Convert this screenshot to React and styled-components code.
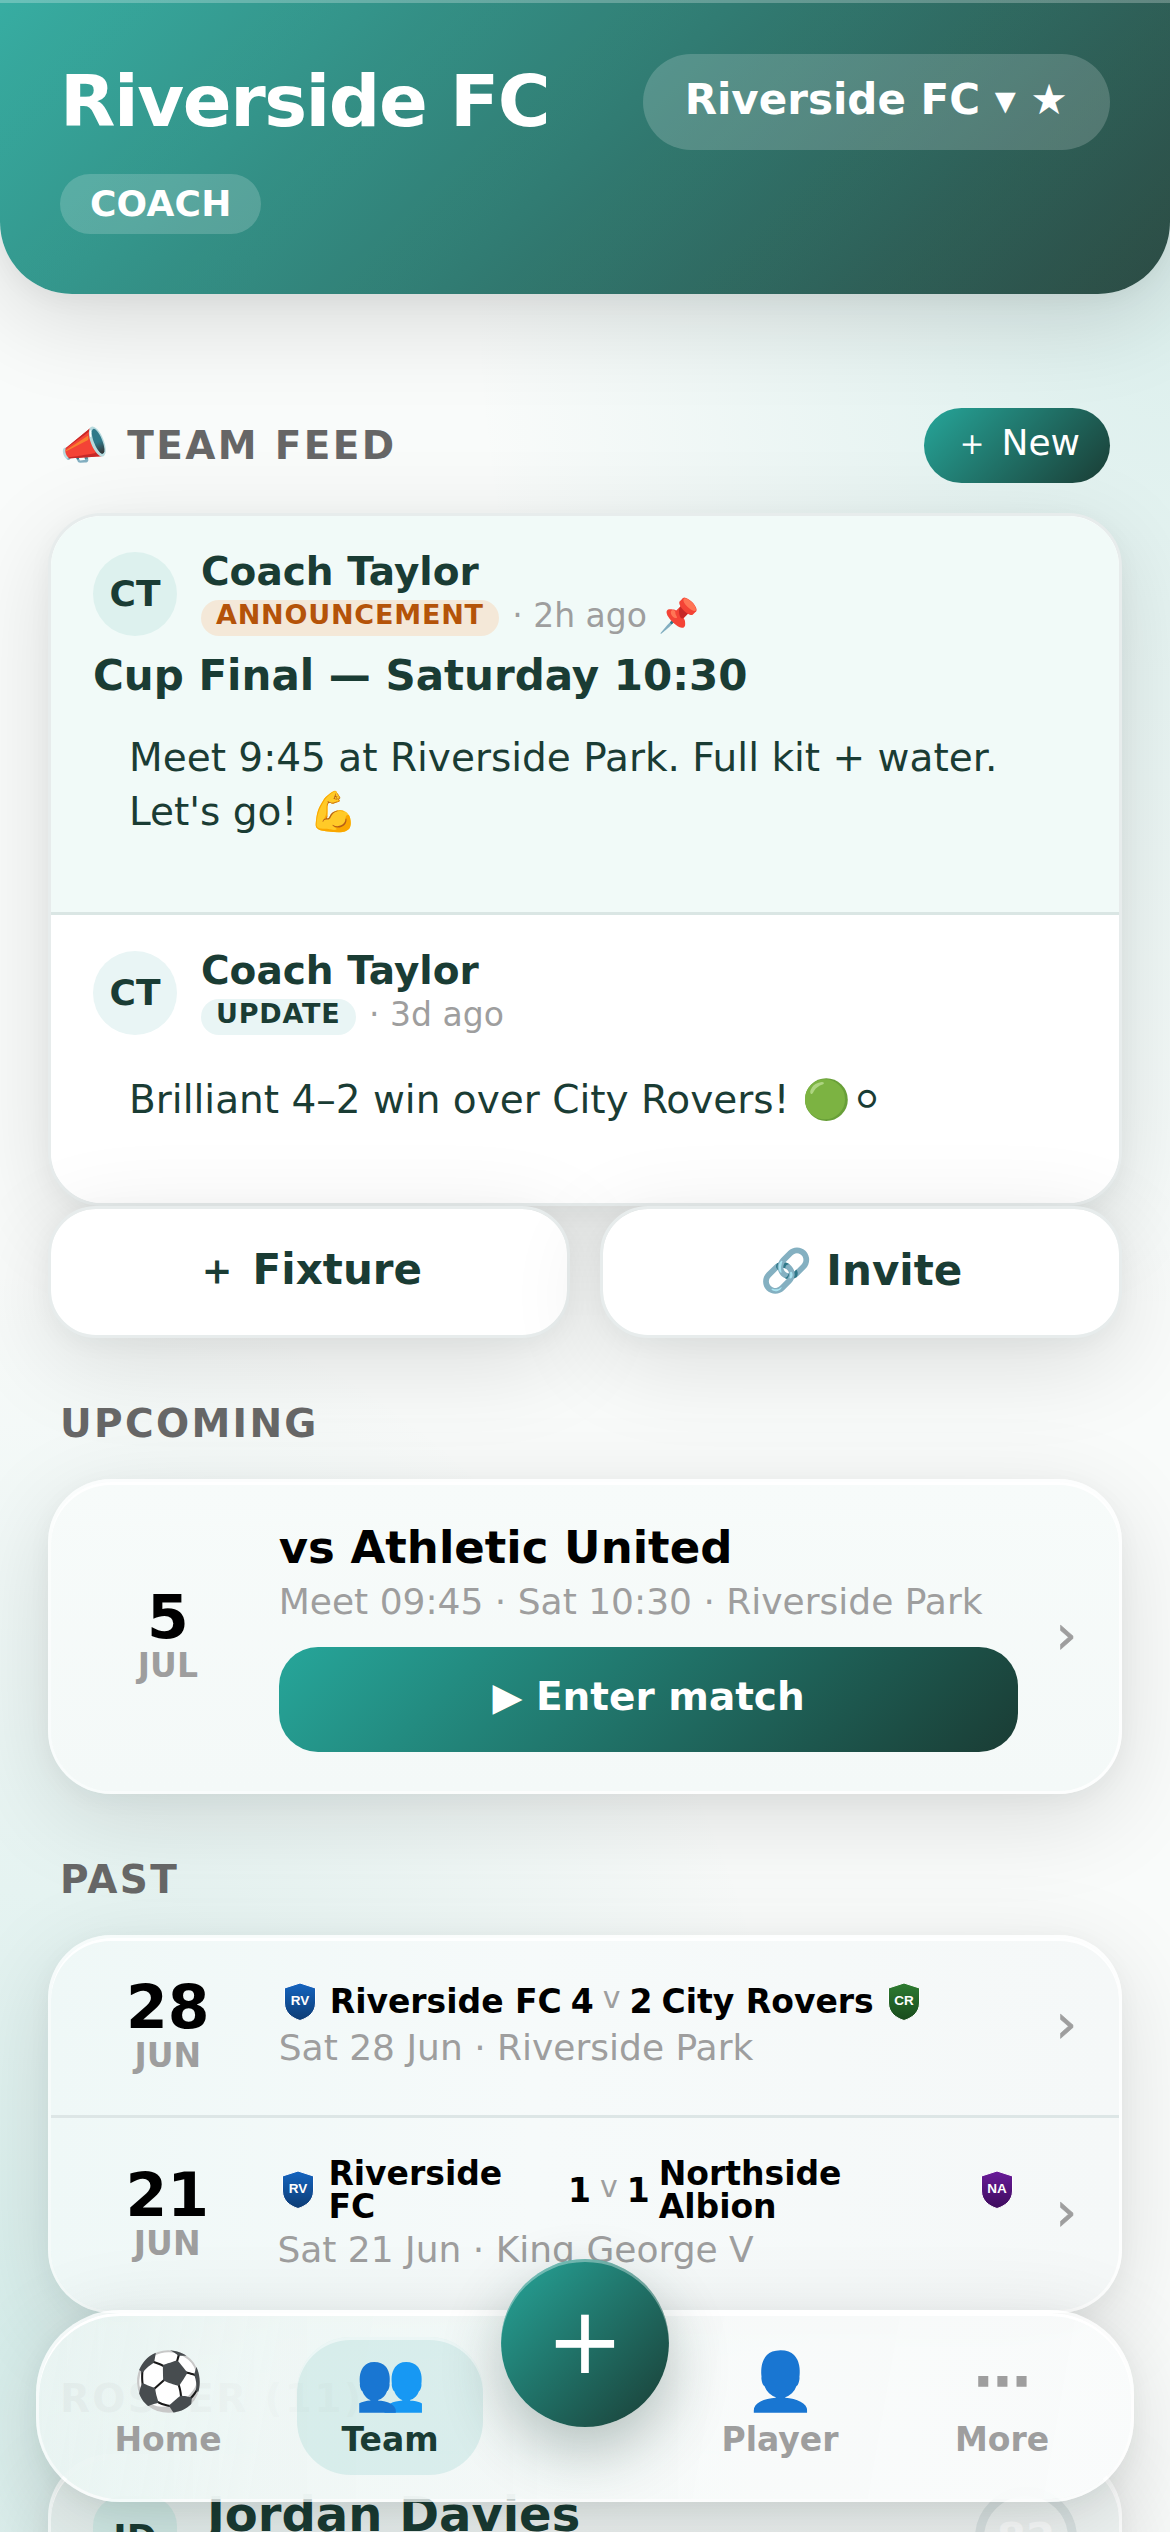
import React from "react";
import styled, { createGlobalStyle, css } from "styled-components";

const ink = "#1a3c34";
const teal = "#26a69a";
const brand = `linear-gradient(135deg, ${teal} 0%, ${ink} 100%)`;
const shadow = "0 24px 96px rgba(0, 0, 0, 0.12), 0 6px 24px rgba(20, 50, 46, 0.04)";

const GlobalStyle = createGlobalStyle`
  * { box-sizing: border-box; }
  html, body { margin: 0; padding: 0; }
  body {
    font-family: "DejaVu Sans", sans-serif;
    color: ${ink};
    overflow: hidden;
  }
  button { font-family: inherit; border: 0; margin: 0; }
`;

const Screen = styled.div`
  height: 2532px;
  width: 1170px;
  overflow: hidden;
  position: relative;
  background:
    radial-gradient(ellipse 60% 42% at 100% 10%, rgba(38, 166, 154, 0.14), transparent 100%),
    radial-gradient(ellipse 70% 42% at 0% 92%, rgba(38, 166, 154, 0.16), transparent 100%),
    #f9fbfa;
`;

const Header = styled.header`
  height: 294px;
  padding: 54px 60px 0;
  border-radius: 0 0 72px 72px;
  background: linear-gradient(rgba(255, 255, 255, 0.08), rgba(255, 255, 255, 0.08)), ${brand};
  box-shadow: 0 24px 96px rgba(0, 0, 0, 0.14), 0 6px 24px rgba(0, 0, 0, 0.04), inset 0 3px 0 rgba(255, 255, 255, 0.25);
  color: #fff;
`;

const HeaderRow = styled.div`
  display: flex;
  justify-content: space-between;
  align-items: center;
  height: 96px;
`;

const ClubName = styled.h1`
  margin: 0;
  padding-bottom: 3px;
  font-size: 72px;
  line-height: 84px;
  letter-spacing: -1.44px;
  font-weight: 700;
`;

const ClubSwitch = styled.button`
  height: 96px;
  padding: 0 42px 6px;
  border-radius: 48px;
  background: rgba(255, 255, 255, 0.18);
  color: #fff;
  font-size: 42px;
  font-weight: 700;
`;

const RoleChip = styled.span`
  display: inline-block;
  margin-top: 24px;
  height: 60px;
  line-height: 60px;
  padding: 0 30px;
  border-radius: 30px;
  background: rgba(255, 255, 255, 0.18);
  font-size: 36px;
  font-weight: 700;
  letter-spacing: 0.2px;
`;

const SectionHead = styled.div`
  display: flex;
  align-items: center;
  justify-content: space-between;
  padding: 0 60px;
  height: ${(p) => p.$h}px;
  margin-top: ${(p) => p.$top}px;
  margin-bottom: ${(p) => p.$bottom}px;
`;

const SectionTitle = styled.h2`
  margin: 0;
  font-size: 39px;
  line-height: 46px;
  font-weight: 700;
  letter-spacing: 2.34px;
  color: #666;
`;

const NewButton = styled.button`
  height: 75px;
  padding: 0 30px 4px;
  border-radius: 38px;
  background: ${brand};
  color: #fff;
  font-size: 36px;
`;

const FeedCard = styled.section`
  margin: 0 48px;
  border: 3px solid #e7ecec;
  border-radius: 54px;
  background: #fff;
  overflow: hidden;
  box-shadow: ${shadow};
`;

const Post = styled.article`
  height: ${(p) => p.$h}px;
  padding: 36px 42px 0;
  background: ${(p) => (p.$pinned ? "#f1faf8" : "#fff")};
  border-bottom: ${(p) => (p.$pinned ? "3px solid #dae6e4" : "0")};
`;

const PostHead = styled.div`
  display: flex;
  gap: 24px;
  height: 84px;
`;

const Avatar = styled.div`
  width: 84px;
  height: 84px;
  flex: none;
  padding-bottom: 2px;
  border-radius: ${(p) => (p.$square ? "30px" : "50%")};
  background: ${(p) => (p.$square ? "#d0e9e5" : p.$soft ? "#e9f5f5" : "#ddf1ee")};
  display: flex;
  align-items: center;
  justify-content: center;
  font-size: 36px;
  font-weight: 700;
`;

const Author = styled.div`
  font-size: 39px;
  font-weight: 700;
  line-height: 45px;
  margin-top: -3px;
`;

const PostMeta = styled.div`
  display: flex;
  align-items: center;
  height: 42px;
  font-size: 33px;
  color: #9e9e9e;
  white-space: pre;
`;

const Badge = styled.span`
  height: 36px;
  line-height: 29px;
  padding: 0 15px;
  margin-top: 6px;
  margin-right: 3px;
  border-radius: 18px;
  font-size: 27px;
  font-weight: 700;
  letter-spacing: 0.8px;
  color: ${(p) => (p.$warn ? "#b45309" : ink)};
  background: ${(p) => (p.$warn ? "#f4e8d8" : "#e9f5f5")};
`;

const Pin = styled.span`
  margin-left: 1px;
`;

const PostTitle = styled.h3`
  margin: 15px 0 0;
  font-size: 42px;
  line-height: 50px;
  font-weight: 700;
`;

const PostBody = styled.p`
  margin: ${(p) => p.$top}px 36px 0;
  font-size: 39px;
  line-height: 54px;
`;

const Actions = styled.div`
  display: grid;
  grid-template-columns: 1fr 1fr;
  gap: 30px;
  padding: 0 48px;
`;

const ActionButton = styled.button`
  height: 132px;
  padding: 0 0 4px;
  border: 3px solid #e7ecec;
  border-radius: 48px;
  background: #fff;
  background-clip: padding-box;
  box-shadow: ${shadow};
  color: ${ink};
  font-size: 42px;
  font-weight: 700;
`;

const surfaces = {
  plain: "linear-gradient(180deg, #f7fbfa, #f4f9f8)",
  tinted: "linear-gradient(90deg, #eff8f7, #f6fafa 45%, #f5f8f8)",
  dim: "linear-gradient(90deg, #e4efed, #edf3f2 45%, #eff4f3)",
};

const GlassCard = styled.section`
  margin: 0 48px;
  border: 3px solid rgba(255, 255, 255, 0.7);
  border-radius: 63px;
  background: ${(p) => surfaces[p.$surface]};
  background-clip: padding-box;
  box-shadow: ${shadow}, inset 0 3px 0 rgba(255, 255, 255, 0.9);
`;

const MatchRow = styled.div`
  display: flex;
  align-items: center;
  height: ${(p) => p.$h}px;
  padding: 0 42px;
  ${(p) => p.$divider && css`
    padding-bottom: 4px;
    border-bottom: 3px solid #dde6e6;
  `}
`;

const DateBox = styled.div`
  width: 150px;
  margin-right: 36px;
  margin-top: ${(p) => p.$shift || 0}px;
  text-align: center;
`;

const Day = styled.div`
  font-size: 60px;
  line-height: 60px;
  font-weight: 700;
  color: #000;
`;

const Month = styled.div`
  font-size: 33px;
  line-height: 38px;
  font-weight: 700;
  color: #9e9e9e;
`;

const MatchInfo = styled.div`
  width: 741px;
`;

const Opponent = styled.div`
  font-size: 45px;
  line-height: 54px;
  font-weight: 700;
  color: #000;
`;

const MatchMeta = styled.div`
  font-size: 36px;
  line-height: 42px;
  margin-top: ${(p) => p.$top || 0}px;
  color: #9e9e9e;
`;

const EnterButton = styled.button`
  display: block;
  width: 100%;
  height: 105px;
  margin-top: 24px;
  padding: 0 0 6px;
  border-radius: 39px;
  background: ${brand};
  color: #fff;
  font-size: 39px;
  font-weight: 700;
`;

const Chevron = styled.span`
  margin-left: 37px;
  margin-top: ${(p) => p.$shift}px;
  font-size: 54px;
  line-height: 54px;
  color: #9e9e9e;
  -webkit-text-stroke: 0.6px #9e9e9e;
`;

const ScoreLine = styled.div`
  display: flex;
  align-items: center;
  gap: 9px;
  font-size: 33px;
  line-height: 33px;
  font-weight: 700;
  color: #000;
`;

const Team = styled.span`
  width: ${(p) => (p.$w ? `${p.$w}px` : "auto")};
  padding-right: ${(p) => (p.$w ? "4px" : "0")};
  white-space: ${(p) => (p.$w ? "normal" : "nowrap")};
`;

const Versus = styled.span`
  font-size: 30px;
  font-weight: 400;
  color: #9e9e9e;
  margin-top: -8px;
`;

const Crest = styled.svg`
  width: 42px;
  height: 42px;
  flex: none;
`;

const PlayerRow = styled.div`
  display: flex;
  align-items: flex-start;
  padding: 39px 42px;
`;

const PlayerName = styled.div`
  flex: 1;
  margin-left: 30px;
  font-size: 48px;
  line-height: 56px;
  font-weight: 700;
  margin-top: -10px;
`;

const Rating = styled.div`
  width: 102px;
  height: 102px;
  margin-top: -9px;
  border: 9px solid #dae3e3;
  border-radius: 50%;
  display: flex;
  align-items: center;
  justify-content: center;
  font-size: 42px;
  font-weight: 700;
  color: #fbfdfd;
`;

const TabBar = styled.nav`
  position: absolute;
  left: 36px;
  top: 2310px;
  width: 1098px;
  height: 192px;
  padding: 0 18px;
  display: flex;
  align-items: center;
  border: 3px solid rgba(255, 255, 255, 0.75);
  border-radius: 84px;
  background:
    linear-gradient(90deg, rgba(225, 242, 239, 0.5), rgba(225, 242, 239, 0) 65%),
    linear-gradient(100deg, rgba(243, 247, 246, 0.88), rgba(246, 249, 248, 0.97) 22%, rgba(249, 251, 251, 0.95));
  background-clip: padding-box;
  box-shadow: 0 24px 96px rgba(0, 0, 0, 0.14), 0 6px 24px rgba(20, 50, 46, 0.05), inset 0 3px 0 #fff;
`;

const TabSlot = styled.div`
  width: 222px;
  display: flex;
  justify-content: center;
`;

const Tab = styled.button`
  width: 186px;
  height: 138px;
  padding: 8px 0 0;
  display: flex;
  flex-direction: column;
  align-items: center;
  border-radius: 54px;
  background: ${(p) => (p.$active ? "rgba(38, 166, 154, 0.12)" : "none")};
  box-shadow: ${(p) => (p.$active ? "inset 0 3px 0 rgba(255, 255, 255, 0.5)" : "none")};
  color: ${(p) => (p.$active ? ink : "#9e9e9e")};
  font-size: 33px;
  font-weight: 700;
`;

const TabIcon = styled.span`
  font-size: 57px;
  line-height: 72px;
  height: 72px;
`;

const TabLabel = styled.span`
  line-height: 39px;
  margin-top: 3px;
`;

const Fab = styled.button`
  width: 168px;
  height: 168px;
  padding: 0 0 3px;
  margin-top: -126px;
  border-radius: 50%;
  background: ${brand};
  box-shadow: 0 24px 60px rgba(27, 58, 54, 0.3), inset 0 3px 0 rgba(255, 255, 255, 0.35);
  color: #fff;
  font-size: 93px;
  line-height: 93px;
`;

function Shield({ code, from, to }) {
  const id = `crest-${code}`;
  return (
    <Crest viewBox="0 0 42 42">
      <defs>
        <linearGradient id={id} x1="0" y1="0" x2="0" y2="1">
          <stop offset="0" stopColor={from} />
          <stop offset="1" stopColor={to} />
        </linearGradient>
      </defs>
      <path
        d="M21 2 L36.5 7 V22 C36.5 31 29.5 37 21 39.500 C12.500 37 5.500 31 5.500 22 V7 Z"
        fill={`url(#${id})`}
        stroke="#fff"
        strokeWidth="1"
      />
      <text x="21" y="23.800" textAnchor="middle" fontFamily="Liberation Sans, sans-serif" fontWeight="700" fontSize="13.500" fill="#fff">
        {code}
      </text>
    </Crest>
  );
}

const riverside = { code: "RV", from: "#1565c0", to: "#0d3c74" };

const results = [
  {
    day: "28", month: "JUN", home: "Riverside FC", away: "City Rovers", score: [4, 2],
    crest: { code: "CR", from: "#2e7d32", to: "#184a1c" }, meta: "Sat 28 Jun · Riverside Park", h: 180, gap: 4,
    dateShift: 2, chevronShift: -1,
  },
  {
    day: "21", month: "JUN", home: "Riverside FC", away: "Northside Albion", score: [1, 1],
    crest: { code: "NA", from: "#6a1b9a", to: "#3d0c5c" }, meta: "Sat 21 Jun · King George V", h: 192, gap: 6,
    widths: [233, 312], dateShift: -1, chevronShift: -4,
  },
];

export default function App() {
  return (
    <Screen>
      <GlobalStyle />
      <Header>
        <HeaderRow>
          <ClubName>Riverside FC</ClubName>
          <ClubSwitch>Riverside FC ▾ ★</ClubSwitch>
        </HeaderRow>
        <RoleChip>COACH</RoleChip>
      </Header>

      <SectionHead $h={75} $top={114} $bottom={30}>
        <SectionTitle>📣 TEAM FEED</SectionTitle>
        <NewButton>＋ New</NewButton>
      </SectionHead>
      <FeedCard>
        <Post $pinned $h={399}>
          <PostHead>
            <Avatar>CT</Avatar>
            <div>
              <Author>Coach Taylor</Author>
              <PostMeta><Badge $warn>ANNOUNCEMENT</Badge> · 2h ago <Pin>📌</Pin></PostMeta>
            </div>
          </PostHead>
          <PostTitle>Cup Final — Saturday 10:30</PostTitle>
          <PostBody $top={30}>Meet 9:45 at Riverside Park. Full kit + water. Let's go! 💪</PostBody>
        </Post>
        <Post $h={288}>
          <PostHead>
            <Avatar $soft>CT</Avatar>
            <div>
              <Author>Coach Taylor</Author>
              <PostMeta><Badge>UPDATE</Badge> · 3d ago</PostMeta>
            </div>
          </PostHead>
          <PostBody $top={38}>Brilliant 4–2 win over City Rovers! 🟢{"\u26AA\uFE0E"}</PostBody>
        </Post>
      </FeedCard>
      <Actions>
        <ActionButton>＋ Fixture</ActionButton>
        <ActionButton>🔗 Invite</ActionButton>
      </Actions>

      <SectionHead $h={46} $top={63} $bottom={32}>
        <SectionTitle>UPCOMING</SectionTitle>
      </SectionHead>
      <GlassCard $surface="plain">
        <MatchRow $h={309}>
          <DateBox $shift={-2}><Day>5</Day><Month>JUL</Month></DateBox>
          <MatchInfo>
            <Opponent>vs Athletic United</Opponent>
            <MatchMeta $top={6}>Meet 09:45 · Sat 10:30 · Riverside Park</MatchMeta>
            <EnterButton>▶ Enter match</EnterButton>
          </MatchInfo>
          <Chevron $shift={-4}>›</Chevron>
        </MatchRow>
      </GlassCard>

      <SectionHead $h={46} $top={63} $bottom={32}>
        <SectionTitle>PAST</SectionTitle>
      </SectionHead>
      <GlassCard $surface="tinted">
        {results.map((r, i) => (
          <MatchRow key={r.day} $h={r.h} $divider={i === 0}>
            <DateBox $shift={r.dateShift}><Day>{r.day}</Day><Month>{r.month}</Month></DateBox>
            <MatchInfo>
              <ScoreLine>
                <Shield {...riverside} />
                <Team $w={r.widths?.[0]}>{r.home}</Team>
                <span>{r.score[0]}</span>
                <Versus>v</Versus>
                <span>{r.score[1]}</span>
                <Team $w={r.widths?.[1]}>{r.away}</Team>
                <Shield {...r.crest} />
              </ScoreLine>
              <MatchMeta $top={r.gap}>{r.meta}</MatchMeta>
            </MatchInfo>
            <Chevron $shift={r.chevronShift}>›</Chevron>
          </MatchRow>
        ))}
      </GlassCard>

      <SectionHead $h={46} $top={63} $bottom={32}>
        <SectionTitle>ROSTER (11)</SectionTitle>
      </SectionHead>
      <GlassCard $surface="dim">
        <PlayerRow>
          <Avatar $square>JD</Avatar>
          <PlayerName>Jordan Davies</PlayerName>
          <Rating>82</Rating>
        </PlayerRow>
      </GlassCard>

      <TabBar>
        <TabSlot><Tab><TabIcon>⚽</TabIcon><TabLabel>Home</TabLabel></Tab></TabSlot>
        <TabSlot><Tab $active><TabIcon>👥</TabIcon><TabLabel>Team</TabLabel></Tab></TabSlot>
        <Fab>+</Fab>
        <TabSlot><Tab><TabIcon>👤</TabIcon><TabLabel>Player</TabLabel></Tab></TabSlot>
        <TabSlot><Tab><TabIcon>⋯</TabIcon><TabLabel>More</TabLabel></Tab></TabSlot>
      </TabBar>
    </Screen>
  );
}
